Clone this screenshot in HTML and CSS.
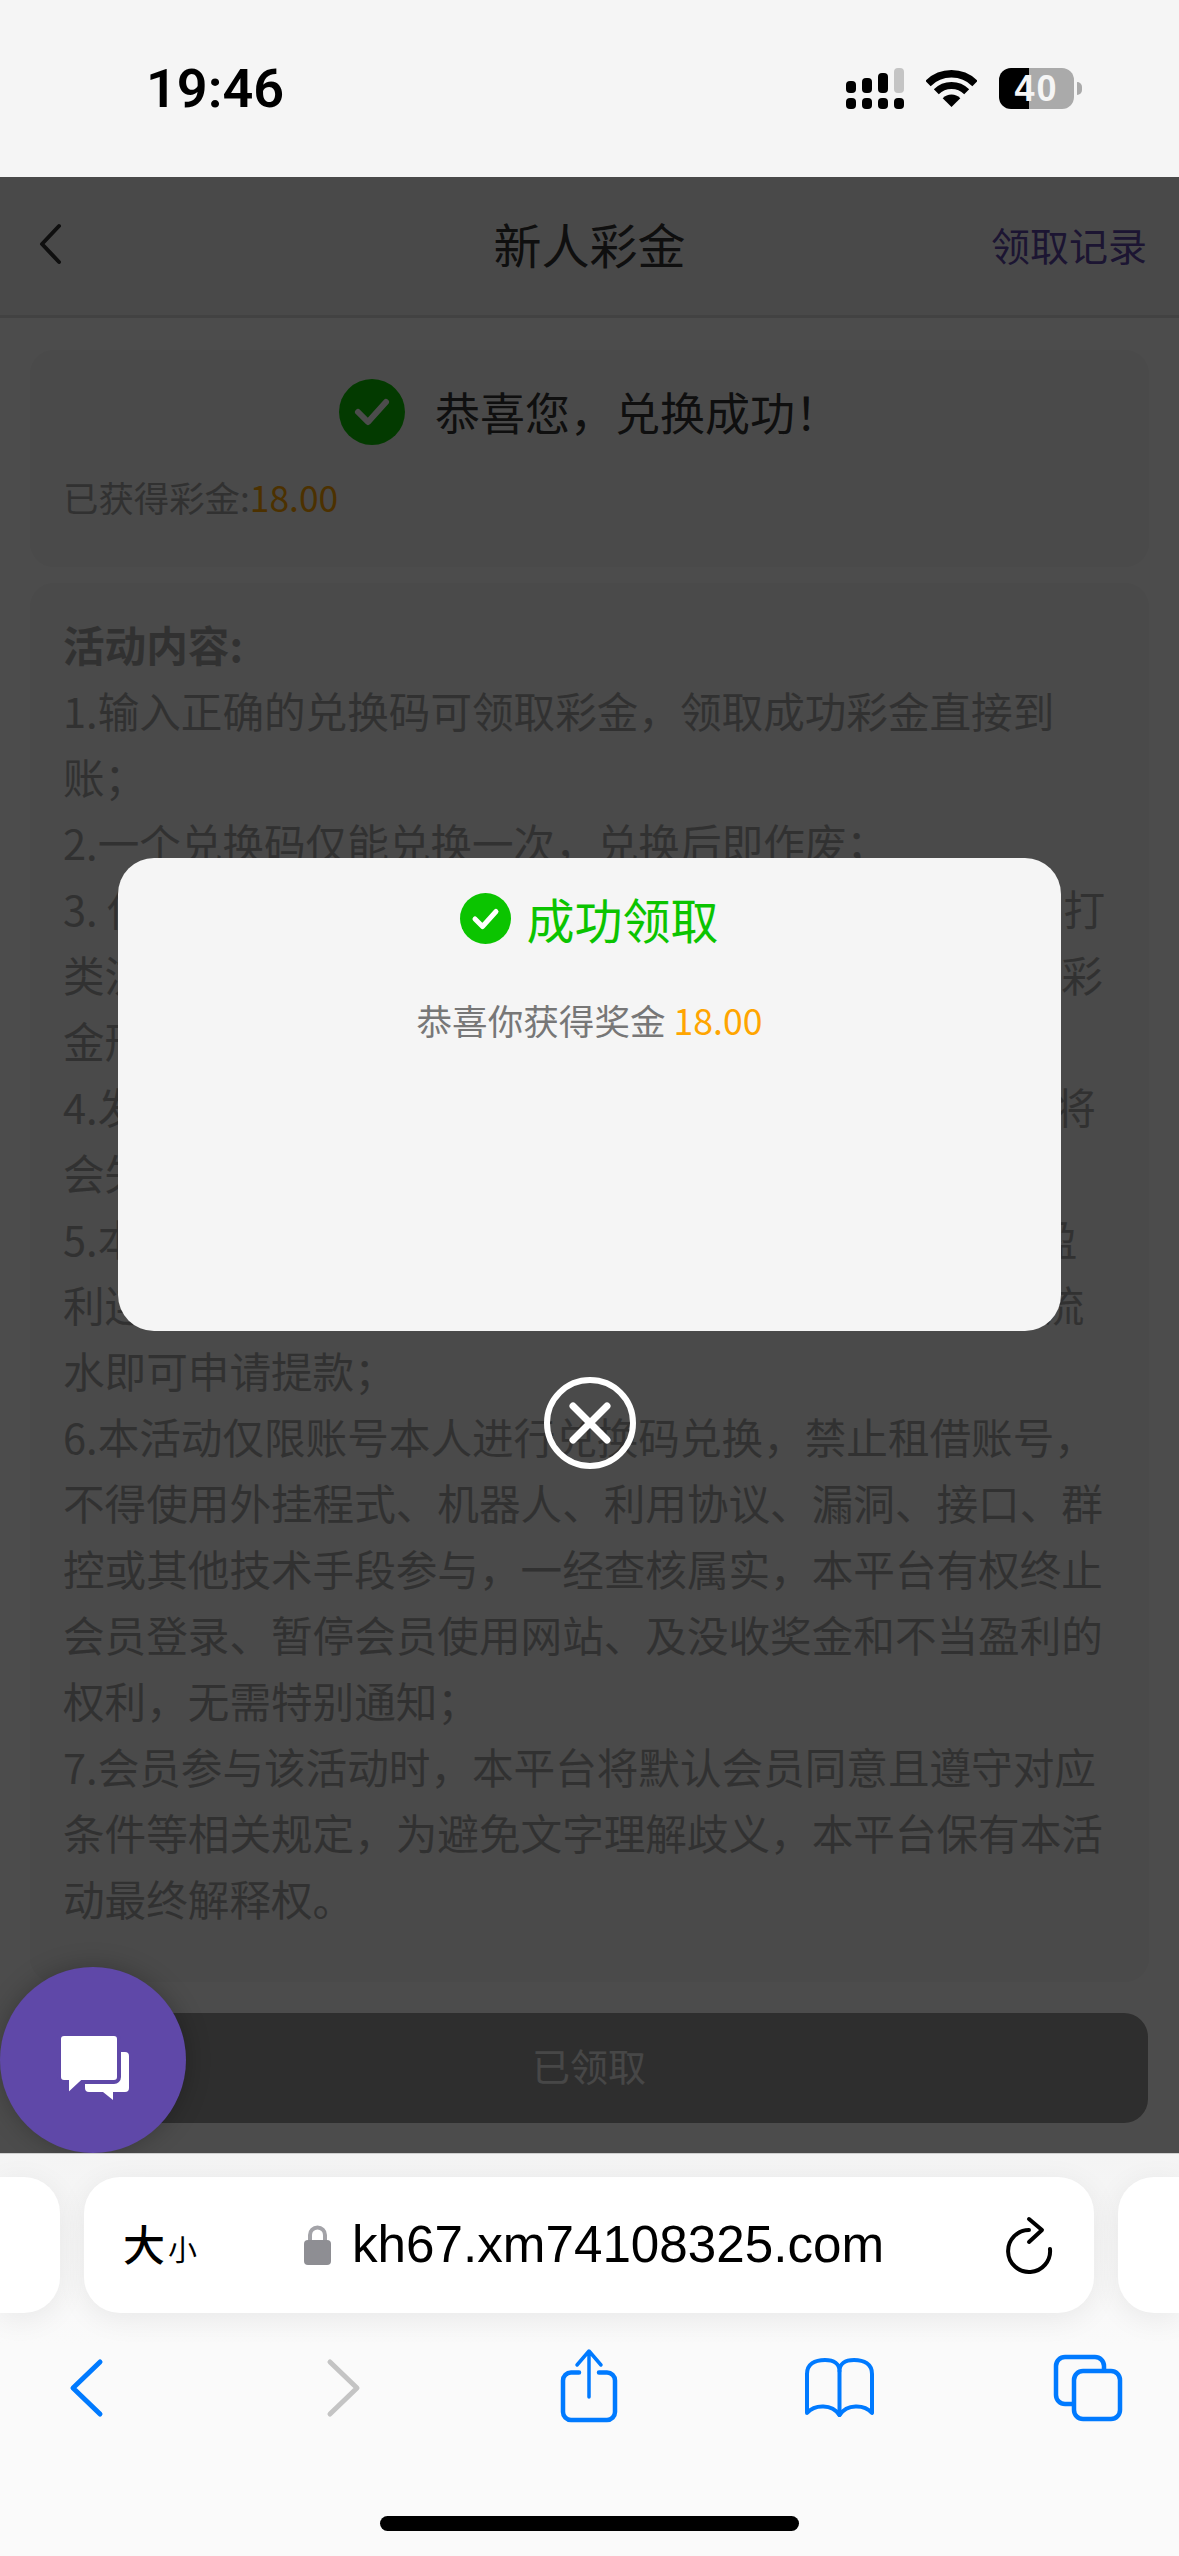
FILE: index.html
```html
<!DOCTYPE html>
<html lang="zh-CN">
<head>
<meta charset="utf-8">
<title>新人彩金</title>
<link rel="stylesheet" href="styles.css">
</head>
<body>
<div class="phone">
  <header class="status">
    <span class="time">19:46</span>
    <div class="status-icons">
      <svg class="signal" width="58" height="41" viewBox="0 0 58 41">
        <rect x="0" y="13" width="10" height="12" rx="4"/>
        <rect x="16" y="10" width="10" height="15" rx="4"/>
        <rect x="32" y="5" width="10" height="20" rx="4"/>
        <rect class="dim" x="48" y="0" width="10" height="25" rx="4"/>
        <rect x="0" y="30" width="10" height="11" rx="4"/>
        <rect x="16" y="30" width="10" height="11" rx="4"/>
        <rect x="32" y="30" width="10" height="11" rx="4"/>
        <rect x="48" y="30" width="10" height="11" rx="4"/>
      </svg>
      <svg class="wifi" width="51" height="37" viewBox="0 0 51 37">
        <path d="M2 13.5A33.25 33.25 0 0 1 49 13.5" fill="none" stroke="#000" stroke-width="7.5"/>
        <path d="M10.3 21.8A21.5 21.5 0 0 1 40.7 21.8" fill="none" stroke="#000" stroke-width="7"/>
        <path d="M25.5 37L16.7 28.2A12.5 12.5 0 0 1 34.3 28.2Z"/>
      </svg>
      <div class="battery">40</div>
    </div>
  </header>

  <main class="viewport">
    <div class="navbar">
      <svg class="nav-back" width="24" height="42" viewBox="0 0 24 42"><path d="M21 3L4 21L21 39" fill="none" stroke="#333" stroke-width="4" stroke-linecap="round" stroke-linejoin="round"/></svg>
      <h1 class="nav-title">新人彩金</h1>
      <a class="nav-link">领取记录</a>
    </div>

    <section class="card result">
      <div class="result-head">
        <svg width="66" height="66" viewBox="0 0 66 66"><circle cx="33" cy="33" r="33" fill="#0bc400"/><path d="M19 33L29 43L47 23" fill="none" stroke="#fff" stroke-width="6" stroke-linecap="round" stroke-linejoin="round"/></svg>
        <span>恭喜您，兑换成功！</span>
      </div>
      <p class="result-amount">已获得彩金:<em>18.00</em></p>
    </section>

    <section class="card rules">
      <h2>活动内容:</h2>
      <p>1.输入正确的兑换码可领取彩金，领取成功彩金直接到账；</p>
      <p>2.一个兑换码仅能兑换一次，兑换后即作废；</p>
      <p>3. 使用兑换码领取彩金后，需完成相应流水方可提款，打<br>类流水要求以活动页面规则为准，未完成流水要求时，彩<br>金形式不可提现；</p>
      <p>4.发现违规套利行为或使用多个账号重复领取者，账号将<br>会失去领取资格，彩金及盈利一律扣除；</p>
      <p>5.本活动彩金需完成1倍规定流水后方可提款，彩金及盈<br>利连同本金需完成1倍流水要求，完成相应的有效投注流<br>水即可申请提款；</p>
      <p>6.本活动仅限账号本人进行兑换码兑换，禁止租借账号，不得使用外挂程式、机器人、利用协议、漏洞、接口、群控或其他技术手段参与，一经查核属实，本平台有权终止会员登录、暂停会员使用网站、及没收奖金和不当盈利的权利，无需特别通知；</p>
      <p>7.会员参与该活动时，本平台将默认会员同意且遵守对应条件等相关规定，为避免文字理解歧义，本平台保有本活动最终解释权。</p>
    </section>

    <button class="claim" type="button">已领取</button>

    <div class="overlay">
      <div class="dialog">
        <div class="dialog-title">
          <svg width="51" height="51" viewBox="0 0 51 51"><circle cx="25.5" cy="25.5" r="25.5" fill="#0bc400"/><path d="M15 26L22.500 33.500L36 18.500" fill="none" stroke="#fff" stroke-width="5" stroke-linecap="round" stroke-linejoin="round"/></svg>
          <span>成功领取</span>
        </div>
        <p class="dialog-text">恭喜你获得奖金 <em>18.00</em></p>
      </div>
      <button class="close" type="button" aria-label="关闭">
        <svg width="92" height="92" viewBox="0 0 92 92"><circle cx="46" cy="46" r="43" fill="none" stroke="#fff" stroke-width="6"/><path d="M29 29L63 63M63 29L29 63" stroke="#fff" stroke-width="7" stroke-linecap="round"/></svg>
      </button>
    </div>

    <div class="chat">
      <svg width="186" height="186" viewBox="0 0 186 186">
        <path fill="#fff" d="M88 85H125a4 4 0 0 1 4 4V121a4 4 0 0 1-4 4H113V133L103 125H89a4 4 0 0 1-4-4V88a3 3 0 0 1 3-3Z"/>
        <path fill="#fff" stroke="#5f48a8" stroke-width="4" d="M64 67H114a5 5 0 0 1 5 5V110a5 5 0 0 1-5 5H82L67 129V115H64a5 5 0 0 1-5-5V72a5 5 0 0 1 5-5Z"/>
      </svg>
    </div>
  </main>

  <footer class="browser">
    <div class="tabs">
      <div class="stub stub-left"></div>
      <div class="pill">
        <span class="size"><b>大</b><small>小</small></span>
        <svg class="lock" width="27" height="40" viewBox="0 0 27 40"><path d="M6 18V10a7.500 7.500 0 0 1 15 0V18" fill="none" stroke="#a3a3a8" stroke-width="4"/><rect x="0" y="15" width="27" height="25" rx="4" fill="#8e8e93"/></svg>
        <span class="url">kh67.xm74108325.com</span>
        <svg class="reload" width="60" height="66" viewBox="0 0 60 66"><path d="M28 18A21 21 0 1 0 49 37" fill="none" stroke="#000" stroke-width="4" stroke-linecap="round"/><path d="M28 7L41 18L28 30" fill="none" stroke="#000" stroke-width="4" stroke-linecap="round" stroke-linejoin="round"/></svg>
      </div>
      <div class="stub stub-right"></div>
    </div>
    <nav class="toolbar">
      <svg width="96" height="80" viewBox="0 0 96 80"><path d="M62 15L35 41L62 67" fill="none" stroke="#007aff" stroke-width="5" stroke-linecap="round" stroke-linejoin="round"/></svg>
      <svg width="96" height="80" viewBox="0 0 96 80"><path d="M40 15L67 41L40 67" fill="none" stroke="#c4c4c4" stroke-width="5" stroke-linecap="round" stroke-linejoin="round"/></svg>
      <svg width="96" height="80" viewBox="0 0 96 80"><g fill="none" stroke="#007aff" stroke-linecap="round" stroke-linejoin="round"><path stroke-width="4.500" d="M38 25.500H30a8 8 0 0 0-8 8V65a8 8 0 0 0 8 8H66a8 8 0 0 0 8-8V33.500a8 8 0 0 0-8-8H58"/><path stroke-width="3.500" d="M48 50V5M36 18L48 4L60 18"/></g></svg>
      <svg width="96" height="80" viewBox="0 0 96 80"><g fill="none" stroke="#007aff" stroke-width="4" stroke-linejoin="round" stroke-linecap="round"><path d="M46.500 24V68"/><path d="M46.500 24C46.500 17 41 13 32 13C22 13 14 17 14 27V66C22 57 39 57 46.500 68C54 57 71 57 79 66V27C79 17 71 13 61 13C52 13 46.500 17 46.500 24Z"/></g></svg>
      <svg width="96" height="80" viewBox="0 0 96 80"><g fill="#fafafa" stroke="#007aff" stroke-width="4.500"><rect x="12" y="10" width="48" height="47" rx="9"/><rect x="30" y="24" width="46" height="48" rx="9"/></g></svg>
    </nav>
    <div class="home-indicator"></div>
  </footer>
</div>
</body>
</html>
```

FILE: styles.css
```css
* { box-sizing: border-box; }
html, body { margin: 0; padding: 0; }
body { font-family: "Noto Sans CJK SC", "Noto Sans", sans-serif; background: #fff; }
h1, h2, p { margin: 0; font-weight: 400; }
em { font-style: normal; }

.phone { width: 1179px; height: 2556px; display: flex; flex-direction: column; overflow: hidden; }

/* status bar */
.status { height: 177px; flex: none; background: #f5f5f5; display: flex; align-items: center; justify-content: space-between; padding: 0 105px 0 146px; }
.time { font-family: Roboto, "Liberation Sans", sans-serif; font-weight: 600; font-size: 54px; line-height: 60px; color: #000; }
.status-icons { display: flex; align-items: center; }
.signal { fill: #000; }
.signal .dim { fill: #c4c4c4; }
.wifi { margin-left: 22px; }
.battery { position: relative; margin-left: 22px; width: 75px; height: 41px; border-radius: 12px; background: linear-gradient(90deg, #000 40%, #aaa 40%); color: #f5f5f5; font-family: "Liberation Sans", sans-serif; font-weight: 700; font-size: 36px; line-height: 41px; text-align: center; letter-spacing: 2px; }
.battery::after { content: ""; position: absolute; left: 78px; top: 14px; width: 5px; height: 13px; border-radius: 0 6px 6px 0; background: #aaa; }

/* page */
.viewport { position: relative; height: 1976px; flex: none; background: #fff; overflow: hidden; }
.navbar { height: 141px; background: #f5f5f5; border-bottom: 3px solid #dcdcdc; display: flex; align-items: center; justify-content: space-between; padding: 0 32px 4px 38px; position: relative; }
.nav-title { position: absolute; left: 0; right: 0; top: 31px; text-align: center; font-size: 48px; line-height: 70px; color: #333; }
.nav-link { font-size: 39px; line-height: 60px; color: #5f48a8; }
.card { margin: 0 30px; background: #f7f7f7; border-radius: 24px; padding: 0 33px; box-shadow: 0 0 20px rgba(0, 0, 0, .02); }
.result { margin-top: 32px; height: 217px; padding-top: 29px; }
.result-head { display: flex; align-items: center; justify-content: center; gap: 30px; font-size: 45px; line-height: 66px; color: #333; }
.result-amount { margin-top: 27px; font-size: 35.4px; line-height: 50px; color: #a6a6a6; }
.result-amount em { color: #ffa500; }
.rules { margin-top: 16px; height: 1399px; padding-top: 28px; font-size: 41.6px; line-height: 66px; color: #a6a6a6; }
.rules h2 { font-size: 41.6px; line-height: 66px; font-weight: 700; }
.claim { display: block; margin: 31px 30px 0; width: 1118px; height: 110px; border: 0; border-radius: 24px; background: #9a9a9a; color: #eee; font-family: inherit; font-size: 38px; padding: 0 0 7px; }

/* modal */
.overlay { position: absolute; inset: 0; background: rgba(0, 0, 0, .7); display: flex; flex-direction: column; align-items: center; justify-content: center; padding-bottom: 3px; }
.dialog { width: 943px; height: 473px; background: #f5f5f5; border-radius: 36px; padding-top: 27px; }
.dialog-title { display: flex; align-items: center; justify-content: center; gap: 15px; font-size: 48px; line-height: 66px; color: #0bc400; }
.dialog-text { margin-top: 39px; text-align: center; font-size: 35.6px; line-height: 60px; color: #777; }
.dialog-text em { color: #ffa500; }
.close { margin-top: 46px; width: 92px; height: 92px; padding: 0; border: 0; background: none; line-height: 0; }

.chat { position: absolute; left: 0; bottom: 0; width: 186px; height: 186px; border-radius: 50%; background: #5f48a8; box-shadow: 0 0 24px rgba(0, 0, 0, .25); line-height: 0; }

/* browser chrome */
.browser { flex: 1; background: linear-gradient(#f4f4f4, #fafafa 190px); border-top: 1px solid #cfcfcf; display: flex; flex-direction: column; }
.tabs { display: flex; gap: 24px; margin-top: 23px; height: 136px; flex: none; }
.stub, .pill { background: #fff; box-shadow: 0 6px 30px rgba(0, 0, 0, .07); }
.stub-left { width: 60px; border-radius: 0 36px 36px 0; }
.stub-right { width: 61px; border-radius: 36px 0 0 36px; }
.pill { width: 1010px; flex: none; border-radius: 36px; display: flex; align-items: center; padding-left: 39px; color: #000; }
.size { width: 181px; display: flex; align-items: baseline; }
.size b { font-weight: 500; font-size: 42px; line-height: 50px; }
.size small { font-size: 29px; line-height: 50px; margin-left: 3px; }
.lock { flex: none; margin-right: 21px; }
.url { flex: 1; font-family: "Liberation Sans", sans-serif; font-size: 51.2px; line-height: 60px; }
.reload { flex: none; margin-right: 33px; }
.toolbar { display: flex; justify-content: space-between; padding: 0 39px 0 38px; margin-top: 34px; flex: none; }
.home-indicator { width: 419px; height: 15px; border-radius: 8px; background: #000; margin: 89px auto 0; flex: none; }
```
